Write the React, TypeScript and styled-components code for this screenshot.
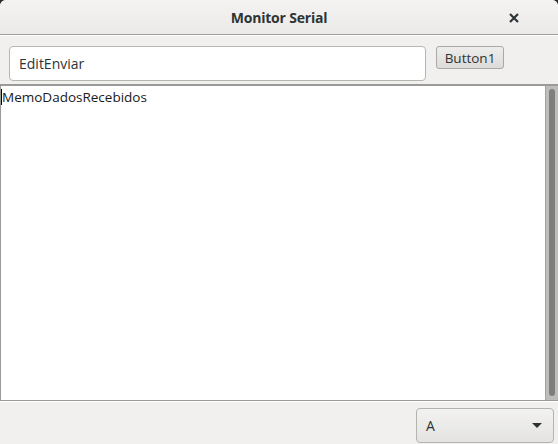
import React from "react"
import styled, { createGlobalStyle } from "styled-components"

const GlobalStyle = createGlobalStyle`
  html, body {
    margin: 0;
    padding: 0;
    background: #2b2b2b;
  }
  body {
    font-family: "Open Sans", "Noto Sans", sans-serif;
  }
`

export default function App() {
  return (
    <>
      <GlobalStyle />
      <Window>
        <TitleBar>
          <Title>Monitor Serial</Title>
          <CloseButton aria-label="close">
            <svg width="10" height="10" viewBox="0 0 10 10">
              <path d="M1 1 L9 9 M9 1 L1 9" stroke="#2e3436" strokeWidth="2.2" />
            </svg>
          </CloseButton>
        </TitleBar>
        <Toolbar>
          <EditBox defaultValue="EditEnviar" />
          <PushButton>Button1</PushButton>
        </Toolbar>
        <MemoArea>
          <MemoText>
            <Caret />
            MemoDadosRecebidos
          </MemoText>
          <ScrollTrack>
            <ScrollThumb />
          </ScrollTrack>
        </MemoArea>
        <StatusBar>
          <Combo>
            <ComboText>A</ComboText>
            <svg width="10" height="6" viewBox="0 0 10 6">
              <path d="M0 0 L10 0 L5 5 Z" fill="#2e3436" />
            </svg>
          </Combo>
        </StatusBar>
      </Window>
    </>
  )
}

const Window = styled.div`
  width: 558px;
  height: 444px;
  display: flex;
  flex-direction: column;
  background: #f1f0ef;
  border-radius: 6px 6px 0 0;
  overflow: hidden;
  box-sizing: border-box;
`

const TitleBar = styled.div`
  height: 35px;
  flex: none;
  display: flex;
  align-items: center;
  justify-content: center;
  position: relative;
  background: linear-gradient(#f4f3f2, #eceae8);
  border-bottom: 1px solid #9f9f9d;
  box-sizing: border-box;
`

const Title = styled.span`
  font-size: 14px;
  font-weight: 700;
  color: #2e3436;
  letter-spacing: -0.2px;
`

const CloseButton = styled.div`
  position: absolute;
  right: 39px;
  top: 13px;
  width: 10px;
  height: 10px;
  display: flex;
`

const Toolbar = styled.div`
  height: 49px;
  flex: none;
  display: flex;
  align-items: flex-start;
  gap: 10px;
  padding: 10px 0 0 9px;
  box-sizing: border-box;
  border-top: 1px solid #ffffff;
`

const EditBox = styled.input`
  width: 417px;
  height: 35px;
  box-sizing: border-box;
  border: 1px solid #b6b6b3;
  border-radius: 4px;
  background: #ffffff;
  padding: 0 9px;
  font-family: "Open Sans", "Noto Sans", sans-serif;
  font-size: 14px;
  color: #2e3436;
  outline: none;
`

const PushButton = styled.button`
  width: 68px;
  height: 23px;
  box-sizing: border-box;
  border: 1px solid #a9a9a7;
  border-radius: 3px;
  background: linear-gradient(#ededeb, #dcdbd9);
  font-family: "Open Sans", "Noto Sans", sans-serif;
  font-size: 13.5px;
  color: #2e3436;
  padding: 0;
`

const MemoArea = styled.div`
  flex: 1;
  display: flex;
  background: #ffffff;
  border: 2px solid #9a9a98;
  border-bottom-width: 1px;
  border-right: none;
  border-left-width: 1px;
  min-height: 0;
`

const MemoText = styled.div`
  flex: 1;
  position: relative;
  padding: 2px 0 0 1px;
  font-family: "Open Sans", "Noto Sans", sans-serif;
  font-size: 13.5px;
  line-height: 18px;
  color: #1a1a1a;
`

const Caret = styled.span`
  position: absolute;
  left: 0;
  top: 3px;
  width: 1px;
  height: 16px;
  background: #000000;
`

const ScrollTrack = styled.div`
  width: 13px;
  flex: none;
  background: #bdbdbc;
  border-left: 1px solid #a2a2a0;
  padding: 3px 3px 4px 3px;
  box-sizing: border-box;
  display: flex;
`

const ScrollThumb = styled.div`
  flex: 1;
  border-radius: 3px;
  background: #7e7e7d;
`

const StatusBar = styled.div`
  height: 43px;
  flex: none;
  display: flex;
  justify-content: flex-end;
  align-items: flex-end;
  padding: 0 4px 1px 0;
  box-sizing: border-box;
  border-top: 1px solid #ffffff;
`

const Combo = styled.div`
  width: 138px;
  height: 35px;
  box-sizing: border-box;
  border: 1px solid #b3b3b0;
  border-radius: 4px;
  background: linear-gradient(#f2f2f1, #e4e3e1);
  display: flex;
  align-items: center;
  justify-content: space-between;
  padding: 0 11px 0 9px;
`

const ComboText = styled.span`
  font-family: "Open Sans", "Noto Sans", sans-serif;
  font-size: 14px;
  color: #2e3436;
`
